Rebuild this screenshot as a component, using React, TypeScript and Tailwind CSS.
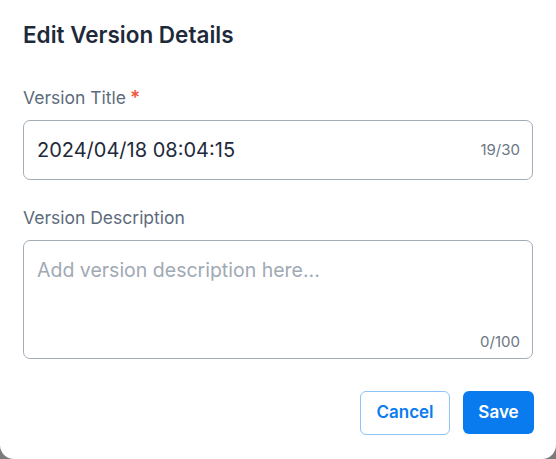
export default function App() {
  return (
    <div className="h-[459px] w-[556px] bg-[#7b7b7b]" style={{ fontFamily: 'Inter, "Liberation Sans", Arial, sans-serif' }}>
      <div className="h-full w-full bg-white rounded-b-[14px] px-[23px] pt-[22px]">
        <h2 className="text-[22.5px] leading-[26px] font-semibold text-[#1e2a3a]">Edit Version Details</h2>

        <div className="mt-[40px]">
          <label className="flex items-center text-[17.5px] leading-[20px] text-[#5d6b7c]">
            Version Title<span className="ml-[4px] text-[19px] font-semibold text-[#f5563d]">*</span>
          </label>
          <div className="mt-[12px] flex h-[60px] items-center justify-between rounded-[7px] border border-[#a3adb9] pl-[13px] pr-[12px]">
            <span className="text-[20px] text-[#1e2a3a]">2024/04/18 08:04:15</span>
            <span className="text-[15px] text-[#6b7684]">19/30</span>
          </div>
        </div>

        <div className="mt-[28px]">
          <label className="block text-[17.5px] leading-[20px] text-[#5d6b7c]">Version Description</label>
          <div className="mt-[12px] flex h-[119px] flex-col justify-between rounded-[7px] border border-[#a3adb9] pl-[13px] pr-[12px] pt-[15px] pb-[5px]">
            <span className="text-[19.5px] text-[#a0a9b4]">Add version description here...</span>
            <span className="self-end text-[15px] text-[#6b7684]">0/100</span>
          </div>
        </div>

        <div className="-mr-[1px] mt-[32px] flex justify-end gap-[13px]">
          <button className="h-[44px] w-[90px] rounded-[6px] border border-[#8fc3f7] bg-white text-[17px] font-semibold text-[#0a7cf0]">
            Cancel
          </button>
          <button className="h-[43px] w-[71px] rounded-[6px] bg-[#0a7bef] text-[17px] font-semibold text-white">
            Save
          </button>
        </div>
      </div>
    </div>
  );
}
